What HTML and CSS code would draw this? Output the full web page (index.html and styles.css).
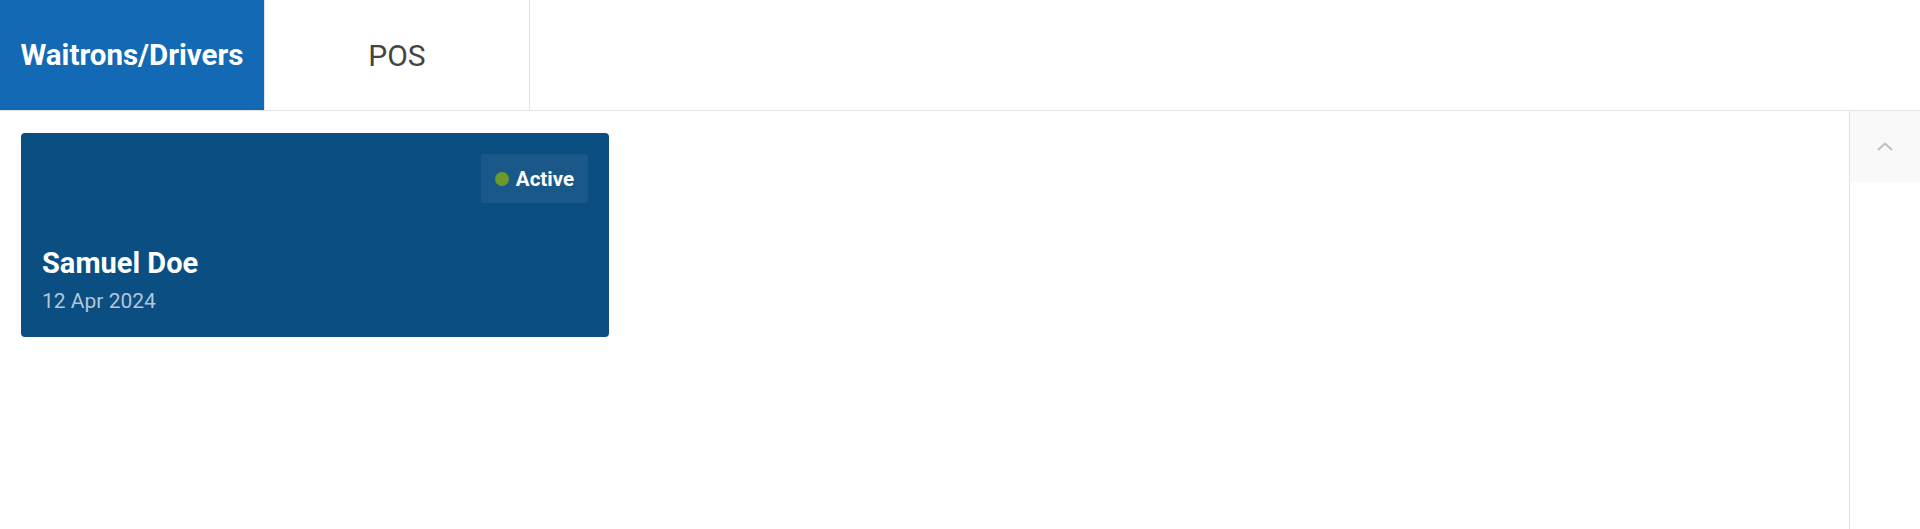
FILE: index.html
```html
<!DOCTYPE html>
<html lang="en">
<head>
    <meta charset="UTF-8">
    <meta name="viewport" content="width=device-width, initial-scale=1.0">
    <title>Staff</title>
    <link rel="stylesheet" href="styles.css">
</head>
<body>
    <div class="tabs">
        <button class="tab active">Waitrons/Drivers</button>
        <button class="tab">POS</button>
    </div>

    <div class="main">
        <div class="content">
            <div class="staff-card">
                <div class="card-top">
                    <span class="status"><span class="dot"></span>Active</span>
                </div>
                <div class="staff-name">Samuel Doe</div>
                <div class="staff-date">12 Apr 2024</div>
            </div>
        </div>

        <div class="side">
            <button class="scroll-up" aria-label="Scroll up">
                <svg width="16" height="9" viewBox="0 0 16 9" fill="none">
                    <path d="M1 8L8 1.5L15 8" stroke="#bdbdbd" stroke-width="2"/>
                </svg>
            </button>
        </div>
    </div>
</body>
</html>
```

FILE: styles.css
```css
:root {
    --tab-color: #1469b5;
    --card-color: #0b4e81;
    --border-color: #e2e2e2;
}

* {
    margin: 0;
    padding: 0;
    box-sizing: border-box;
}

html, body {
    height: 100%;
}

body {
    font-family: Roboto, "Liberation Sans", Arial, sans-serif;
    background: #fff;
    display: flex;
    flex-direction: column;
    overflow: hidden;
}

.tabs {
    display: flex;
    height: 111px;
    border-bottom: 1px solid var(--border-color);
    flex-shrink: 0;
}

.tab {
    width: 265px;
    border: none;
    border-right: 1px solid var(--border-color);
    background: #fff;
    font-family: inherit;
    font-size: 30px;
    color: #444;
    cursor: pointer;
}

.tab.active {
    background: var(--tab-color);
    color: #fff;
    font-weight: 700;
    font-size: 29.5px;
}

.main {
    flex: 1;
    display: flex;
}

.content {
    flex: 1;
    padding: 22px 21px;
}

.staff-card {
    width: 588px;
    height: 204px;
    background: var(--card-color);
    border-radius: 4px;
    padding: 21px 21px 0 21px;
    color: #fff;
}

.card-top {
    display: flex;
    justify-content: flex-end;
}

.status {
    display: flex;
    align-items: center;
    gap: 7px;
    height: 49px;
    padding: 0 14px;
    background: rgba(255, 255, 255, 0.06);
    border-radius: 3px;
    font-size: 20.5px;
    font-weight: 700;
}

.dot {
    width: 14px;
    height: 14px;
    border-radius: 50%;
    background: #6b9a2b;
}

.staff-name {
    margin-top: 43px;
    font-size: 29px;
    line-height: 34px;
    font-weight: 700;
}

.staff-date {
    margin-top: 9px;
    font-size: 21px;
    line-height: 25px;
    color: #b3c6d8;
}

.side {
    width: 71px;
    border-left: 1px solid var(--border-color);
}

.scroll-up {
    display: flex;
    align-items: center;
    justify-content: center;
    width: 100%;
    height: 71px;
    border: none;
    background: #f9f9f9;
    cursor: pointer;
}
```
